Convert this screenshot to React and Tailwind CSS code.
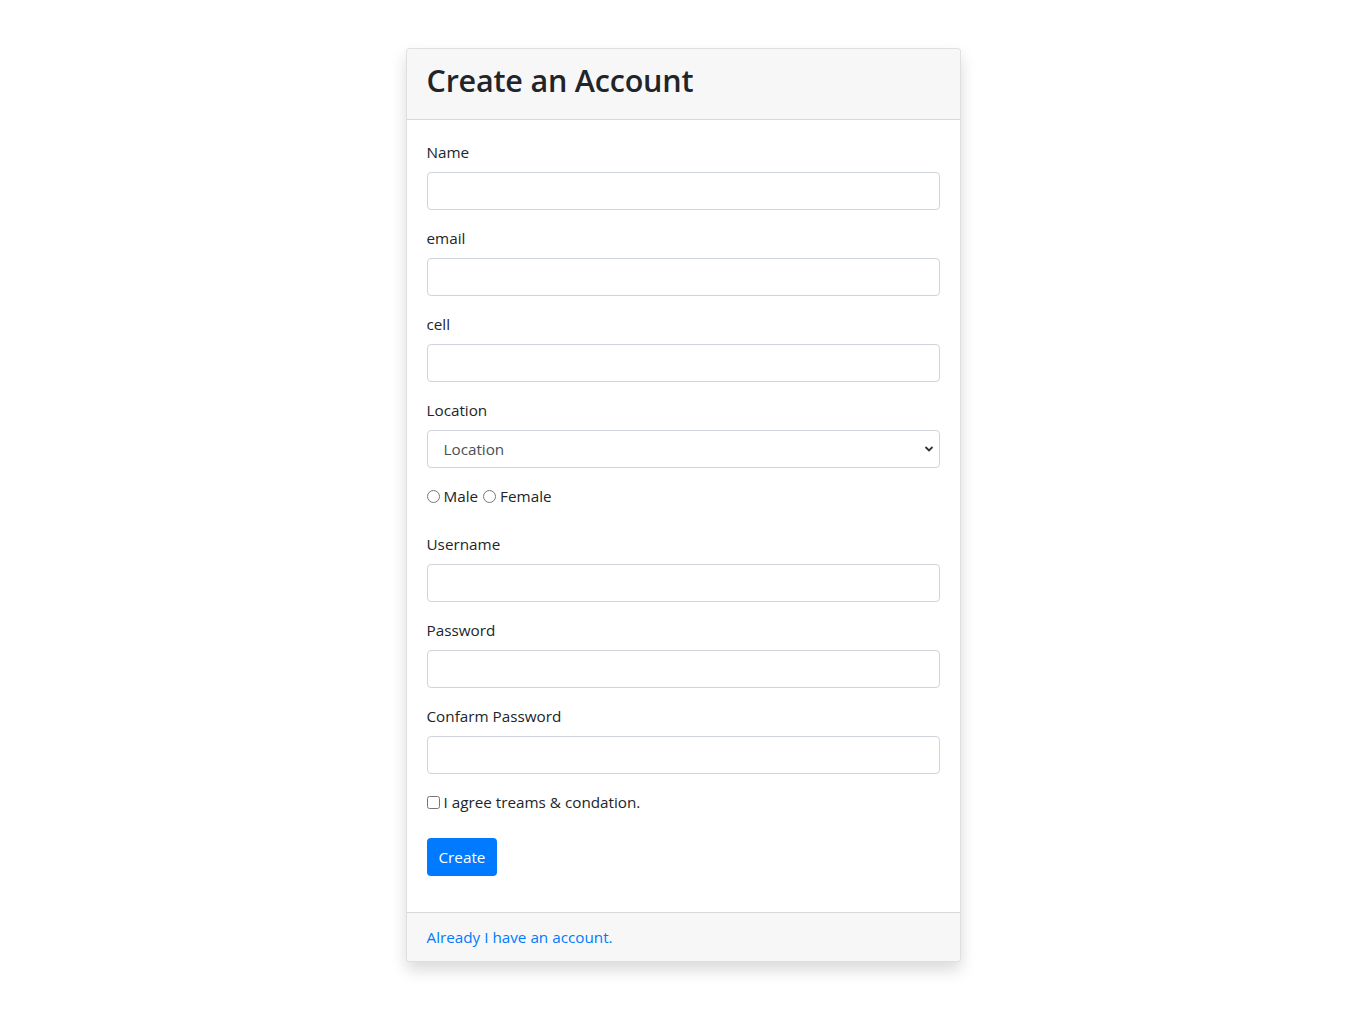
import { useState } from 'react';

const Field = ({ label, type = 'text' }) => (
    <div className="mb-4">
        <label className="block mb-2 leading-6">{label}</label>
        <input
            type={type}
            className="block w-full h-[38px] px-3 rounded border border-[#ced4da] bg-white text-[#495057] outline-none"
        />
    </div>
);

const App = () => {
    const [gender, setGender] = useState('');

    return (
        <div className="min-h-screen bg-white pt-12 text-[15.25px] text-[#212529] font-['Open_Sans',sans-serif]">
            <div className="mx-auto w-[555px] rounded border border-black/[0.125] bg-white shadow-[0_8px_16px_rgba(0,0,0,0.15)]">
                {/* Header */}
                <div className="px-5 pt-3 pb-3 bg-[#f7f7f7] border-b border-black/[0.125] rounded-t">
                    <h2 className="mb-2 text-[30.5px] leading-[38px] font-semibold tracking-[-0.2px]">Create an Account</h2>
                </div>

                {/* Body */}
                <div className="p-5">
                    <Field label="Name" />
                    <Field label="email" type="email" />
                    <Field label="cell" />

                    <div className="mb-4">
                        <label className="block mb-2 leading-6">Location</label>
                        <div className="relative">
                            <select className="block w-full h-[38px] pl-4 pr-8 rounded border border-[#ced4da] bg-white text-[#495057] appearance-none outline-none">
                                <option>Location</option>
                                <option>Dhaka</option>
                                <option>Chittagong</option>
                            </select>
                            <svg className="absolute right-[6px] top-[14px] w-[10px] h-[10px] text-[#333] pointer-events-none" viewBox="0 0 10 10" fill="none">
                                <path d="M1.5 3l3.5 3.5L8.5 3" stroke="currentColor" strokeWidth="1.8" />
                            </svg>
                        </div>
                    </div>

                    <div className="mb-6 flex items-center leading-6">
                        <input type="radio" name="gender" checked={gender === 'm'} onChange={() => setGender('m')} className="w-[13px] h-[13px] mr-[4px] ml-0" />
                        <span>Male</span>
                        <input type="radio" name="gender" checked={gender === 'f'} onChange={() => setGender('f')} className="w-[13px] h-[13px] ml-[5px] mr-[4px]" />
                        <span>Female</span>
                    </div>

                    <Field label="Username" />
                    <Field label="Password" type="password" />
                    <Field label="Confarm Password" type="password" />

                    <div className="mb-6 flex items-center leading-6">
                        <input type="checkbox" className="w-[13px] h-[13px] mr-[4px]" />
                        <span>I agree treams &amp; condation.</span>
                    </div>

                    <div className="mb-4">
                        <button className="h-[38px] px-3 rounded bg-[#007bff] text-white leading-6">Create</button>
                    </div>
                </div>

                {/* Footer */}
                <div className="px-5 py-3 bg-[#f7f7f7] border-t border-black/[0.125] rounded-b leading-6">
                    <a href="#" className="text-[#007bff]">Already I have an account.</a>
                </div>
            </div>
        </div>
    );
};

export default App;
